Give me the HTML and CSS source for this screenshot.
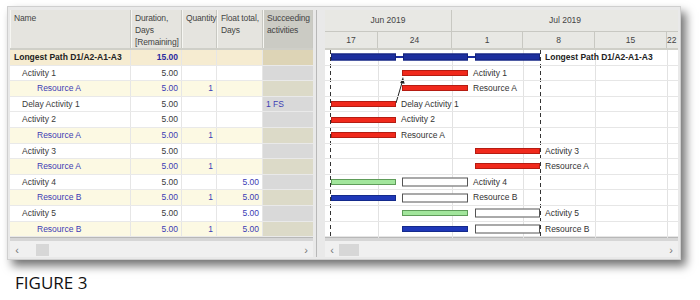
FILE: index.html
```html
<!DOCTYPE html>
<html lang="en">
    <head>
        <meta charset="UTF-8" />
        <title>Figure 3 - Longest Path</title>
        <link rel="stylesheet" href="styles.css">
    </head>
    <body>
        <div class="page">
            <div class="frame">
                <div class="pane table-pane">
                    <div class="thead">
                        <div class="th">Name</div>
                        <div class="th">Duration,<br>Days<br>[Remaining]</div>
                        <div class="th">Quantity</div>
                        <div class="th">Float total,<br>Days</div>
                        <div class="th succ">Succeeding<br>activities</div>
                    </div>
                    <div class="tbody">
                        <div class="tr lp">
                            <div class="td name">Longest Path D1/A2-A1-A3</div>
                            <div class="td num">15.00</div>
                            <div class="td num"></div>
                            <div class="td num"></div>
                            <div class="td succ"></div>
                        </div>
                        <div class="tr act">
                            <div class="td name">Activity 1</div>
                            <div class="td num">5.00</div>
                            <div class="td num"></div>
                            <div class="td num"></div>
                            <div class="td succ"></div>
                        </div>
                        <div class="tr res">
                            <div class="td name">Resource A</div>
                            <div class="td num">5.00</div>
                            <div class="td num">1</div>
                            <div class="td num"></div>
                            <div class="td succ"></div>
                        </div>
                        <div class="tr act">
                            <div class="td name">Delay Activity 1</div>
                            <div class="td num">5.00</div>
                            <div class="td num"></div>
                            <div class="td num"></div>
                            <div class="td succ link">1 FS</div>
                        </div>
                        <div class="tr act">
                            <div class="td name">Activity 2</div>
                            <div class="td num">5.00</div>
                            <div class="td num"></div>
                            <div class="td num"></div>
                            <div class="td succ"></div>
                        </div>
                        <div class="tr res">
                            <div class="td name">Resource A</div>
                            <div class="td num">5.00</div>
                            <div class="td num">1</div>
                            <div class="td num"></div>
                            <div class="td succ"></div>
                        </div>
                        <div class="tr act">
                            <div class="td name">Activity 3</div>
                            <div class="td num">5.00</div>
                            <div class="td num"></div>
                            <div class="td num"></div>
                            <div class="td succ"></div>
                        </div>
                        <div class="tr res">
                            <div class="td name">Resource A</div>
                            <div class="td num">5.00</div>
                            <div class="td num">1</div>
                            <div class="td num"></div>
                            <div class="td succ"></div>
                        </div>
                        <div class="tr act">
                            <div class="td name">Activity 4</div>
                            <div class="td num">5.00</div>
                            <div class="td num"></div>
                            <div class="td num float">5.00</div>
                            <div class="td succ"></div>
                        </div>
                        <div class="tr res">
                            <div class="td name">Resource B</div>
                            <div class="td num">5.00</div>
                            <div class="td num">1</div>
                            <div class="td num float">5.00</div>
                            <div class="td succ"></div>
                        </div>
                        <div class="tr act">
                            <div class="td name">Activity 5</div>
                            <div class="td num">5.00</div>
                            <div class="td num"></div>
                            <div class="td num float">5.00</div>
                            <div class="td succ"></div>
                        </div>
                        <div class="tr res">
                            <div class="td name">Resource B</div>
                            <div class="td num">5.00</div>
                            <div class="td num">1</div>
                            <div class="td num float">5.00</div>
                            <div class="td succ"></div>
                        </div>
                    </div>
                    <div class="hscroll">
                        <span class="arr">&lsaquo;</span>
                        <span class="thumb"></span>
                        <span class="arr right">&rsaquo;</span>
                    </div>
                </div>

                <div class="splitter"></div>

                <div class="pane gantt-pane">
                    <div class="months">
                        <div class="month jun">Jun 2019</div>
                        <div class="month jul">Jul 2019</div>
                    </div>
                    <div class="weeks">
                        <div class="week w1">17</div>
                        <div class="week w2">24</div>
                        <div class="week w3">1</div>
                        <div class="week w4">8</div>
                        <div class="week w5">15</div>
                        <div class="week w6">22</div>
                    </div>
                    <div class="gbody">
                        <svg class="glines" width="353" height="188" viewBox="0 0 353 188">
                            <!-- week grid -->
                            <g stroke="#e2e2e2" stroke-width="1">
                                <line x1="53.5" y1="0" x2="53.5" y2="188" />
                                <line x1="127.5" y1="0" x2="127.5" y2="188" />
                                <line x1="198.5" y1="0" x2="198.5" y2="188" />
                                <line x1="270.5" y1="0" x2="270.5" y2="188" />
                                <line x1="342.5" y1="0" x2="342.5" y2="188" />
                            </g>
                            <!-- data date / finish lines -->
                            <g stroke="#333" stroke-width="1" stroke-dasharray="4 3">
                                <line x1="5.5" y1="0" x2="5.5" y2="188" />
                                <line x1="215.5" y1="0" x2="215.5" y2="188" />
                            </g>
                            <!-- FS link -->
                            <line x1="71" y1="53" x2="77.5" y2="31" stroke="#222" stroke-width="1" />
                            <polygon points="78,27 75.2,33 79.6,33.8" fill="#222" />
                        </svg>

                        <div class="grow">
                            <span class="lp-line" style="left:6px;width:209px"></span>
                            <span class="bar lp-bar" style="left:6px;width:65px"></span>
                            <span class="bar lp-bar" style="left:78px;width:65px"></span>
                            <span class="bar lp-bar" style="left:150px;width:65px"></span>
                            <span class="label bold" style="left:220px">Longest Path D1/A2-A1-A3</span>
                        </div>
                        <div class="grow">
                            <span class="bar red" style="left:77px;width:66px"></span>
                            <span class="label" style="left:148px">Activity 1</span>
                        </div>
                        <div class="grow">
                            <span class="bar red" style="left:77px;width:66px"></span>
                            <span class="label" style="left:148px">Resource A</span>
                        </div>
                        <div class="grow">
                            <span class="bar red" style="left:6px;width:65px"></span>
                            <span class="label" style="left:76px">Delay Activity 1</span>
                        </div>
                        <div class="grow">
                            <span class="bar red" style="left:6px;width:65px"></span>
                            <span class="label" style="left:76px">Activity 2</span>
                        </div>
                        <div class="grow">
                            <span class="bar red" style="left:6px;width:65px"></span>
                            <span class="label" style="left:76px">Resource A</span>
                        </div>
                        <div class="grow">
                            <span class="bar red" style="left:150px;width:65px"></span>
                            <span class="label" style="left:220px">Activity 3</span>
                        </div>
                        <div class="grow">
                            <span class="bar red" style="left:150px;width:65px"></span>
                            <span class="label" style="left:220px">Resource A</span>
                        </div>
                        <div class="grow">
                            <span class="bar green" style="left:6px;width:65px"></span>
                            <span class="bar box" style="left:77px;width:66px"></span>
                            <span class="label" style="left:148px">Activity 4</span>
                        </div>
                        <div class="grow">
                            <span class="bar blue" style="left:6px;width:65px"></span>
                            <span class="bar box" style="left:77px;width:66px"></span>
                            <span class="label" style="left:148px">Resource B</span>
                        </div>
                        <div class="grow">
                            <span class="bar green" style="left:77px;width:66px"></span>
                            <span class="bar box" style="left:150px;width:65px"></span>
                            <span class="label" style="left:220px">Activity 5</span>
                        </div>
                        <div class="grow">
                            <span class="bar blue" style="left:77px;width:66px"></span>
                            <span class="bar box" style="left:150px;width:65px"></span>
                            <span class="label" style="left:220px">Resource B</span>
                        </div>
                    </div>
                    <div class="hscroll">
                        <span class="arr">&lsaquo;</span>
                        <span class="thumb wide"></span>
                        <span class="arr right">&rsaquo;</span>
                    </div>
                </div>
            </div>
            <div class="caption">FIGURE 3</div>
        </div>
    </body>
</html>
```

FILE: styles.css
```css
* {
    margin: 0;
    padding: 0;
    box-sizing: border-box;
}
body {
    background: #ffffff;
    font-family: "Liberation Sans", Arial, sans-serif;
    font-size: 8.5px;
    color: #3a3a3a;
}
.page {
    padding: 6px 0 0 7px;
}
.frame {
    width: 674px;
    display: flex;
    background: #e9e9e9;
    border: 1px solid #cfcfcf;
    padding: 3px 2px 2px 2px;
    box-shadow: 5px 6px 9px rgba(0, 0, 0, 0.55);
}
.pane {
    display: flex;
    flex-direction: column;
    background: #ffffff;
}
.table-pane {
    width: 303px;
}
.splitter {
    width: 10px;
    border-left: 1px solid #b8b8b8;
    border-right: 1px solid #c4c4c4;
    margin: 0 3px;
}
.gantt-pane {
    width: 353px;
    margin-left: -4px;
}

/* table */
.thead,
.tr {
    display: grid;
    grid-template-columns: 121px 51px 35px 46px 50px;
}
.thead {
    height: 40px;
    background: #e5e4df;
    border-bottom: 2px solid #cfcfc8;
}
.th {
    padding: 2px 2px 0 3px;
    line-height: 12px;
    color: #444;
    white-space: nowrap;
    letter-spacing: -0.15px;
    border-right: 1px solid #c8c8c2;
    border-left: 1px solid #f6f6f2;
}
.th.succ {
    background: #cbcbc4;
}
.tr {
    height: 15.6px;
    line-height: 14.6px;
    border-bottom: 1px solid #e9e9e9;
}
.td {
    white-space: nowrap;
    border-right: 1px solid #e6e6e6;
    overflow: hidden;
}
.td.num {
    text-align: right;
    padding-right: 3px;
}
.td.float {
    color: #3c3cb4;
}
.td.succ {
    background: #d9d9d9;
    padding-left: 3px;
    border-right: 0;
}
.td.link {
    color: #3c3cb4;
}
.tr.lp {
    background: #f6ecd1;
    font-weight: bold;
    color: #222;
}
.tr.lp .td.name {
    padding-left: 4px;
}
.tr.lp .td.num {
    color: #2a2aa0;
}
.tr.lp .td.succ {
    background: #ddd4b6;
}
.tr.act .td.name {
    padding-left: 12px;
}
.tr.res {
    background: #fcf9e3;
    color: #3c3cb4;
}
.tr.res .td.name {
    padding-left: 27px;
}
.tr.res .td.succ {
    background: #dcdac8;
}

/* scrollbars */
.hscroll {
    height: 20px;
    margin-top: auto;
    border-top: 1px solid #b8b8b8;
    box-shadow: inset 0 3px 0 #d6d6d6;
    padding-top: 4px;
    background: #f0f0f0;
    display: flex;
    align-items: center;
    color: #777;
    font-size: 11px;
}
.hscroll .arr {
    width: 14px;
    text-align: center;
    line-height: 14px;
}
.hscroll .arr.right {
    margin-left: auto;
}
.hscroll .thumb {
    width: 13px;
    height: 12px;
    margin-left: 12px;
    background: #d7d7d7;
}
.hscroll .thumb.wide {
    width: 20px;
    margin-left: 0;
}

/* gantt header */
.months {
    display: flex;
    height: 22px;
    background: #e8e8e4;
    border-bottom: 1px solid #c8c8c2;
}
.month {
    text-align: center;
    line-height: 21px;
    color: #444;
    border-right: 1px solid #c8c8c2;
}
.month.jun {
    width: 127px;
}
.month.jul {
    width: 226px;
    border-right: 0;
}
.weeks {
    display: flex;
    height: 18px;
    background: #e8e8e4;
    border-bottom: 2px solid #cfcfc8;
}
.week {
    text-align: center;
    line-height: 16px;
    color: #444;
    border-right: 1px solid #c8c8c2;
    overflow: hidden;
}
.w1 { width: 53px; }
.w2 { width: 74px; }
.w3 { width: 71px; }
.w4 { width: 72px; }
.w5 { width: 72px; }
.w6 { width: 11px; border-right: 0; text-align: left; }

/* gantt body */
.gbody {
    position: relative;
}
.glines {
    position: absolute;
    left: 0;
    top: 0;
}
.grow {
    position: relative;
    height: 15.6px;
    border-bottom: 1px solid #e6e6e6;
}
.bar {
    position: absolute;
    top: 50%;
    height: 6px;
    transform: translateY(-50%);
}
.lp-line {
    position: absolute;
    top: 50%;
    height: 2px;
    margin-top: -1px;
    background: #1c2f9e;
}
.lp-bar {
    height: 7px;
    background: #1c2f9e;
    border: 1px solid #13227a;
}
.bar.red {
    background: #f0291c;
    border: 1px solid #b51c12;
}
.bar.blue {
    background: #1f38b8;
    border: 1px solid #142a8c;
}
.bar.green {
    background: #a2e69c;
    border: 1px solid #5f9c5a;
}
.bar.box {
    height: 9px;
    background: #ffffff;
    border: 1px solid #555555;
}
.label {
    position: absolute;
    top: 0;
    line-height: 14.6px;
    white-space: nowrap;
    color: #333;
}
.label.bold {
    font-weight: bold;
    color: #222;
}

.caption {
    margin: 13px 0 0 8px;
    font-family: "Open Sans", "Liberation Sans", sans-serif;
    font-size: 17px;
    line-height: 20px;
    color: #111;
}
```
